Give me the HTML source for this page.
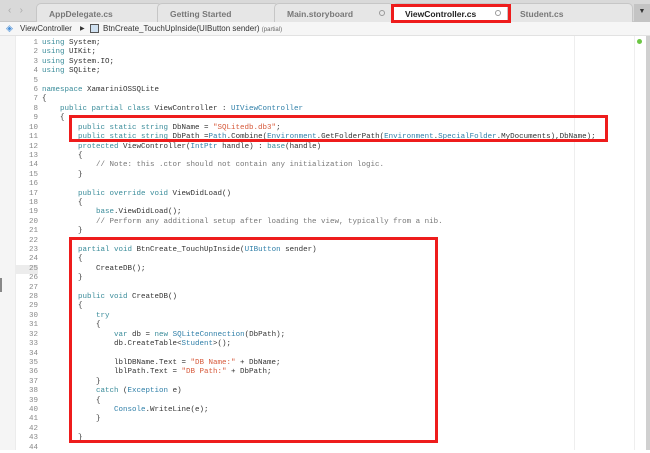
<!DOCTYPE html>
<html><head><meta charset="utf-8"><style>
*{margin:0;padding:0;box-sizing:border-box}
body{width:650px;height:450px;overflow:hidden;background:#fff;position:relative;font-family:"Liberation Sans",sans-serif}
.top{position:absolute;left:0;top:0;width:650px;height:22px;background:#d9d9d9;border-bottom:1px solid #c8c8c8}
.tab{position:absolute;top:3px;height:19px;background:#e6e6e6;border:1px solid #c6c6c6;border-bottom:none;border-radius:5px 5px 0 0;font-size:8.5px;font-weight:bold;color:#777;padding:5px 0 0 12px}
.tab .o{position:absolute;right:8px;top:6px;width:6px;height:6px;border:1px solid #999;border-radius:50%}
.crumb{position:absolute;left:0;top:22px;width:650px;height:14px;background:#f6f6f6;border-bottom:1px solid #e2e2e2;font-size:8px;color:#333}
.gut{position:absolute;left:0;top:36px;width:16px;height:414px;background:#f5f5f5;border-right:1px solid #ececec}
.code{position:absolute;left:0;top:39px;font-family:"Liberation Mono",monospace;font-size:7.5px;color:#333}
.ln{position:absolute;left:16px;width:22px;text-align:right;color:#888;height:9.41px;line-height:9.41px}
.tx{position:absolute;left:42px;white-space:pre;height:9.41px;line-height:9.41px}
.k{color:#3a8c9a}.t{color:#2f7fa8}.s{color:#d6593a}.c{color:#777}
.box{position:absolute;border:3px solid #ee1c1c}
</style></head><body>
<div class="top">
<div style="position:absolute;left:8px;top:5px;color:#aaa;font-size:10px">&#8249;&nbsp;&nbsp;&nbsp;&#8250;</div>
<div class="tab" style="left:36px;width:126px">AppDelegate.cs</div>
<div class="tab" style="left:157px;width:122px">Getting Started</div>
<div class="tab" style="left:274px;width:120px">Main.storyboard<span class="o"></span></div>
<div class="tab" style="left:392px;width:118px;background:#fff;color:#222">ViewController.cs<span class="o"></span></div>
<div class="tab" style="left:507px;width:126px">Student.cs</div>
<div style="position:absolute;left:634px;top:4px;width:16px;height:18px;background:#c4c4c4;font-size:7px;color:#333;text-align:center;padding-top:4px">&#9660;</div>
</div>
<div class="crumb">
<span style="position:absolute;left:6px;top:1px;color:#4a90d9;font-size:9px">&#9672;</span>
<span style="position:absolute;left:20px;top:2px">ViewController</span>
<span style="position:absolute;left:80px;top:3px;font-size:6px">&#9654;</span>
<span style="position:absolute;left:90px;top:2px;width:9px;height:9px;border:1px solid #555;background:#cfe0f0"></span>
<span style="position:absolute;left:103px;top:2px">BtnCreate_TouchUpInside(UIButton sender) <span style="font-size:6px;color:#666">(partial)</span></span>
</div>
<div class="gut"></div>
<div style="position:absolute;left:0;top:278px;width:2px;height:14px;background:#888"></div>
<div style="position:absolute;left:16px;top:265px;width:22px;height:9px;background:#ececec"></div>
<div style="position:absolute;left:574px;top:36px;width:1px;height:414px;background:#eee"></div>
<div style="position:absolute;left:634px;top:36px;width:1px;height:414px;background:#eee"></div>
<div style="position:absolute;left:646px;top:36px;width:4px;height:414px;background:#d0d0d0"></div>
<div style="position:absolute;left:637px;top:39px;width:5px;height:5px;border-radius:50%;background:#6cc644"></div>
<div class="code" id="c"></div>
<div class="box" style="left:391px;top:4px;width:120px;height:19px"></div>
<div class="box" style="left:69px;top:115px;width:539px;height:27px"></div>
<div class="box" style="left:69px;top:237px;width:369px;height:206px"></div>
<script>
var L=[
'<span class="k">using</span> System;',
'<span class="k">using</span> UIKit;',
'<span class="k">using</span> System.IO;',
'<span class="k">using</span> SQLite;',
'',
'<span class="k">namespace</span> XamariniOSSQLite',
'{',
'    <span class="k">public partial class</span> ViewController : <span class="t">UIViewController</span>',
'    {',
'        <span class="k">public static string</span> DbName = <span class="s">"SQLitedb.db3"</span>;',
'        <span class="k">public static string</span> DbPath =<span class="t">Path</span>.Combine(<span class="t">Environment</span>.GetFolderPath(<span class="t">Environment</span>.<span class="t">SpecialFolder</span>.MyDocuments),DbName);',
'        <span class="k">protected</span> ViewController(<span class="t">IntPtr</span> handle) : <span class="k">base</span>(handle)',
'        {',
'            <span class="c">// Note: this .ctor should not contain any initialization logic.</span>',
'        }',
'',
'        <span class="k">public override void</span> ViewDidLoad()',
'        {',
'            <span class="k">base</span>.ViewDidLoad();',
'            <span class="c">// Perform any additional setup after loading the view, typically from a nib.</span>',
'        }',
'',
'        <span class="k">partial void</span> BtnCreate_TouchUpInside(<span class="t">UIButton</span> sender)',
'        {',
'            CreateDB();',
'        }',
'',
'        <span class="k">public void</span> CreateDB()',
'        {',
'            <span class="k">try</span>',
'            {',
'                <span class="k">var</span> db = <span class="k">new</span> <span class="t">SQLiteConnection</span>(DbPath);',
'                db.CreateTable&lt;<span class="t">Student</span>&gt;();',
'',
'                lblDBName.Text = <span class="s">"DB Name:"</span> + DbName;',
'                lblPath.Text = <span class="s">"DB Path:"</span> + DbPath;',
'            }',
'            <span class="k">catch</span> (<span class="t">Exception</span> e)',
'            {',
'                <span class="t">Console</span>.WriteLine(e);',
'            }',
'',
'        }',
''];
var h='';for(var i=0;i<L.length;i++){var y=(i*9.41).toFixed(2);h+='<div class="ln" style="top:'+y+'px">'+(i+1)+'</div><div class="tx" style="top:'+y+'px">'+L[i]+'</div>';}
document.getElementById('c').innerHTML=h;
</script>
</body></html>
